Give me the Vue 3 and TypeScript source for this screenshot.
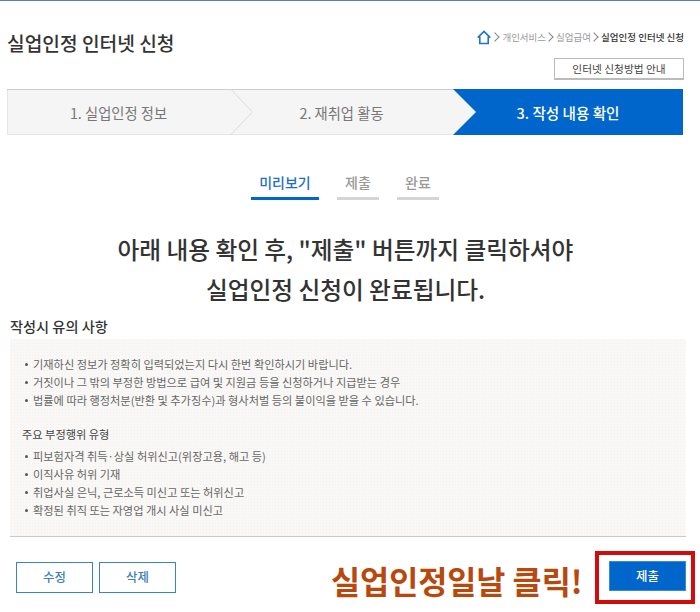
<script setup lang="ts">
const crumbs: string[] = ['개인서비스', '실업급여']
const notes: string[] = [
  '기재하신 정보가 정확히 입력되었는지 다시 한번 확인하시기 바랍니다.',
  '거짓이나 그 밖의 부정한 방법으로 급여 및 지원금 등을 신청하거나 지급받는 경우',
  '법률에 따라 행정처분(반환 및 추가징수)과 형사처벌 등의 불이익을 받을 수 있습니다.',
]
const types: string[] = [
  '피보험자격 취득·상실 허위신고(위장고용, 해고 등)',
  '이직사유 허위 기재',
  '취업사실 은닉, 근로소득 미신고 또는 허위신고',
  '확정된 취직 또는 자영업 개시 사실 미신고',
]
</script>

<template>
  <div class="page">
    <header class="head">
      <h1 class="title">실업인정 인터넷 신청</h1>
      <div class="head-right">
        <nav class="crumbs">
          <svg class="home" width="14" height="15" viewBox="0 0 15 15" fill="none" stroke="#1f74c8" stroke-width="1.7">
            <path d="M0.8 7.6 7.5 1 14.2 7.6M3 6.4V14H12V6.4" />
          </svg>
          <template v-for="c in crumbs" :key="c">
            <span class="sep"></span><span>{{ c }}</span>
          </template>
          <span class="sep"></span><strong>실업인정 인터넷 신청</strong>
        </nav>
        <button class="guide">인터넷 신청방법 안내</button>
      </div>
    </header>

    <div class="stepper">
      <div class="step">1. 실업인정 정보</div>
      <svg class="chev" width="24" height="46" viewBox="0 0 24 46" fill="none" stroke="#dcdcdc">
        <path d="M0.5 0 22.5 23 0.5 46" />
      </svg>
      <div class="step">2. 재취업 활동</div>
      <div class="step current">3. 작성 내용 확인</div>
    </div>

    <div class="tabs">
      <div class="tab active">미리보기</div>
      <div class="tab">제출</div>
      <div class="tab">완료</div>
    </div>

    <p class="lead">아래 내용 확인 후, "제출" 버튼까지 클릭하셔야<br />실업인정 신청이 완료됩니다.</p>

    <h2 class="sub">작성시 유의 사항</h2>
    <section class="panel">
      <ul class="list">
        <li v-for="n in notes" :key="n">{{ n }}</li>
      </ul>
      <h3 class="panel-h">주요 부정행위 유형</h3>
      <ul class="list">
        <li v-for="t in types" :key="t">{{ t }}</li>
      </ul>
    </section>

    <footer class="actions">
      <button class="btn">수정</button>
      <button class="btn">삭제</button>
      <span class="callout">실업인정일날 클릭!</span>
      <span class="highlight"><button class="btn primary">제출</button></span>
    </footer>
  </div>
</template>

<style>
html, body { margin: 0; background: #fff; }
</style>

<style scoped>
.page {
  width: 700px;
  height: 612px;
  box-sizing: border-box;
  border-top: 1px solid #5a7cbd;
  overflow: hidden;
  font-family: "Noto Sans CJK KR", "Noto Sans", sans-serif;
  color: #333;
  position: relative;
}
.head {
  display: flex;
  justify-content: space-between;
  padding: 0 16px 0 7px;
  height: 88px;
}
.title {
  margin: 28px 0 0;
  font-size: 19.2px;
  line-height: 28px;
  font-weight: 500;
  color: #333;
}
.head-right {
  display: flex;
  flex-direction: column;
  align-items: flex-end;
}
.crumbs {
  margin-top: 28px;
  height: 16px;
  display: flex;
  align-items: center;
  font-size: 9.5px;
  color: #999;
  white-space: nowrap;
}
.crumbs strong { font-weight: 500; color: #333; }
.home { margin-right: 1px; }
.sep {
  width: 5px;
  height: 5px;
  margin: 0 4px 0 0;
  border-top: 1px solid #888;
  border-right: 1px solid #888;
  transform: rotate(45deg) scale(1.1);
}
.guide {
  margin-top: 13px;
  width: 130px;
  height: 22px;
  padding: 0;
  box-sizing: border-box;
  background: #fff;
  border: 1px solid #bbb;
  border-bottom-width: 2px;
  font: inherit;
  font-size: 10.7px;
  color: #444;
}
.stepper {
  margin: 0 17px 0 7px;
  height: 46px;
  box-sizing: border-box;
  background: #f5f5f5;
  border-top: 1px solid #ccc;
  border-bottom: 1px solid #e6e6e6;
  display: flex;
  position: relative;
  box-shadow: inset 1px 0 0 #e6e6e6;
}
.step {
  width: 223px;
  flex: none;
  display: flex;
  align-items: center;
  justify-content: center;
  font-size: 14.3px;
  color: #777;
}
.chev {
  position: absolute;
  left: 223px;
  top: -1px;
}
.step.current {
  flex: 1;
  width: auto;
  margin: -1px 0;
  background: #0066cc;
  color: #fff;
  font-size: 14.6px;
  font-weight: 500;
  clip-path: polygon(0 0, 100% 0, 100% 100%, 0 100%, 23px 50%);
}
.tabs {
  display: flex;
  justify-content: center;
  gap: 18px;
  margin-top: 37px;
  padding-right: 10px;
}
.tab {
  width: 42px;
  height: 28px;
  box-sizing: border-box;
  text-align: center;
  font-size: 14px;
  line-height: 21px;
  font-weight: 500;
  color: #999;
  border-bottom: 3px solid #d5d5d5;
}
.tab.active {
  width: 68px;
  color: #1f6fc4;
  border-bottom-color: #0066cc;
}
.lead {
  margin: 29px 0 0;
  padding-right: 9px;
  text-align: center;
  font-size: 23.7px;
  line-height: 40px;
  font-weight: 500;
  color: #333;
}
.sub {
  margin: 7px 0 0 10px;
  font-size: 14.2px;
  line-height: 20px;
  font-weight: 500;
  color: #333;
}
.panel {
  margin: 3px 14px 0 10px;
  height: 198px;
  box-sizing: border-box;
  padding: 16px 13px 0;
  background-color: #f9f8f6;
  background-image: radial-gradient(circle, #f3f1ee 0.8px, transparent 1px);
  background-size: 3px 3px;
  border-bottom: 1px solid #c8c8c8;
}
.list {
  margin: 0;
  padding: 0;
  list-style: none;
  font-size: 11.2px;
  line-height: 18px;
  color: #666;
}
.list li {
  position: relative;
  padding-left: 10px;
  white-space: nowrap;
}
.list li::before {
  content: "";
  position: absolute;
  left: 2px;
  top: 8px;
  width: 3px;
  height: 3px;
  border-radius: 50%;
  background: #555;
}
.panel-h {
  margin: 16px 0 4px -1px;
  font-size: 11.2px;
  line-height: 18px;
  font-weight: 400;
  color: #444;
}
.actions {
  display: flex;
  align-items: center;
  padding-left: 16px;
  margin-top: 24px;
  height: 32px;
  position: relative;
}
.btn {
  width: 77px;
  height: 31px;
  padding: 0;
  margin-right: 6px;
  box-sizing: border-box;
  background: #fff;
  border: 1px solid #3c82c4;
  font: inherit;
  font-size: 12.4px;
  font-weight: 500;
  color: #3a7dbd;
}
.callout {
  margin-left: 149px;
  margin-top: 6px;
  font-size: 31.6px;
  font-weight: 700;
  color: #b8480c;
  white-space: nowrap;
  line-height: 32px;
}
.highlight {
  position: absolute;
  left: 595px;
  top: -10px;
  width: 100px;
  height: 53px;
  box-sizing: border-box;
  border: 4px solid #d10c0c;
  padding: 6px 0 0 10px;
}
.btn.primary {
  display: block;
  margin: 0;
  height: 30px;
  background: #0066cc;
  border-color: #3c8ad6;
  color: #fff;
}
</style>
